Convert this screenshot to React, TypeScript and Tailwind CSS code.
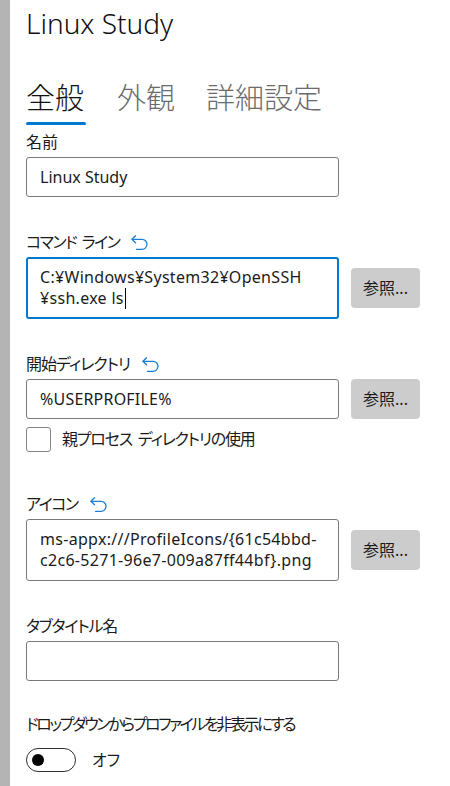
const ResetIcon = () => (
  <svg
    width="18"
    height="16"
    viewBox="0 0 18 16"
    fill="none"
    stroke="#1a7fd4"
    strokeWidth="1.3"
    strokeLinecap="round"
    strokeLinejoin="round"
  >
    <path d="M4.5 0.8 1 4.3l3.5 3.5" />
    <path d="M1 4.3h10a5 5 0 0 1 0 10H5.5" />
  </svg>
);

function FieldLabel({
  text,
  reset = false,
  className = '',
  tight = 'tracking-[-1.5px]',
}: {
  text: string;
  reset?: boolean;
  className?: string;
  tight?: string;
}) {
  return (
    <div className={`flex h-[21px] items-center gap-3 text-[16px] leading-[21px] text-[#1b1b1b] ${className}`}>
      <span className={`whitespace-pre ${tight}`}>{text}</span>
      {reset ? <ResetIcon /> : null}
    </div>
  );
}

function BrowseButton() {
  return (
    <button
      type="button"
      className="ml-3 flex h-[40px] w-[69px] items-center justify-center rounded-[4px] bg-[#cccccc] text-[16px] text-[#1b1b1b]"
    >
      参照...
    </button>
  );
}

export default function App() {
  return (
    <div className="flex min-h-[786px] w-[450px] bg-white font-['Noto_Sans','Noto_Sans_CJK_JP',sans-serif] [font-feature-settings:'palt']">
      <div className="w-[10px] shrink-0 bg-[#b4b4b4]" />

      <div className="flex-1 pl-4">
        <h1 className="mt-[6px] text-[28px] leading-[34px] font-light text-[#111]">Linux Study</h1>

        <div className="mt-[40px] flex gap-[31px] text-[29px] leading-[36px] font-light">
          <div className="flex flex-col">
            <span className="text-[#111]">全般</span>
            <div className="mt-[6px] h-[3px] w-[60px] rounded-full bg-[#0078d4]" />
          </div>
          <span className="text-[#6b6b6b]">外観</span>
          <span className="text-[#6b6b6b]">詳細設定</span>
        </div>

        <FieldLabel text="名前" tight="tracking-normal" className="mt-[7px]" />
        <div className="mt-[4px] flex h-[40px] w-[313px] items-center rounded-[3px] border border-[#7a7a7a] pl-[13px] text-[16px] text-[#1b1b1b]">
          Linux Study
        </div>

        <FieldLabel text="コマンド  ライン" reset className="mt-[35px]" />
        <div className="mt-[4px] flex items-center">
          <div className="h-[62px] w-[313px] rounded-[3px] border-2 border-[#0078d4] pt-[8px] pl-[12px] text-[16px] leading-[21px] tracking-[0.3px] text-[#1b1b1b]">
            <div>C:¥Windows¥System32¥OpenSSH</div>
            <div className="flex items-center">
              ¥ssh.exe ls
              <span className="ml-[1px] inline-block h-[21px] w-px bg-black" />
            </div>
          </div>
          <BrowseButton />
        </div>

        <FieldLabel text="開始ディレクトリ" reset tight="tracking-[-1px]" className="mt-[35px]" />
        <div className="mt-[4px] flex items-center">
          <div className="flex h-[40px] w-[313px] items-center rounded-[3px] border border-[#7a7a7a] pl-[13px] text-[16px] tracking-[0.2px] text-[#1b1b1b]">
            %USERPROFILE%
          </div>
          <BrowseButton />
        </div>

        <div className="mt-[8px] flex items-center">
          <div className="h-[25px] w-[25px] rounded-[3px] border border-[#858585]" />
          <span className="ml-[11px] whitespace-pre text-[16px] leading-[21px] tracking-[-1.2px] text-[#1b1b1b]">
            {'親プロセス  ディレクトリの使用'}
          </span>
        </div>

        <FieldLabel text="アイコン" reset className="mt-[42px]" />
        <div className="mt-[4px] flex items-center">
          <div className="h-[62px] w-[313px] rounded-[3px] border border-[#7a7a7a] pt-[9px] pl-[13px] text-[16px] leading-[21px] tracking-[0.3px] text-[#1b1b1b]">
            <div>ms-appx:///ProfileIcons/{'{'}61c54bbd-</div>
            <div>c2c6-5271-96e7-009a87ff44bf{'}'}.png</div>
          </div>
          <BrowseButton />
        </div>

        <FieldLabel text="タブタイトル名" tight="tracking-[-1.2px]" className="mt-[35px]" />
        <div className="mt-[4px] h-[40px] w-[313px] rounded-[3px] border border-[#7a7a7a]" />

        <FieldLabel text="ドロップダウンからプロファイルを非表示にする" tight="tracking-[-2.4px]" className="mt-[33px]" />
        <div className="mt-[13px] flex items-center">
          <div className="flex h-[24px] w-[50px] items-center rounded-full border-[1.5px] border-[#303030]">
            <div className="ml-[5px] h-[12px] w-[12px] rounded-full bg-black" />
          </div>
          <span className="ml-[16px] text-[16px] leading-[21px] text-[#1b1b1b]">オフ</span>
        </div>
      </div>
    </div>
  );
}
